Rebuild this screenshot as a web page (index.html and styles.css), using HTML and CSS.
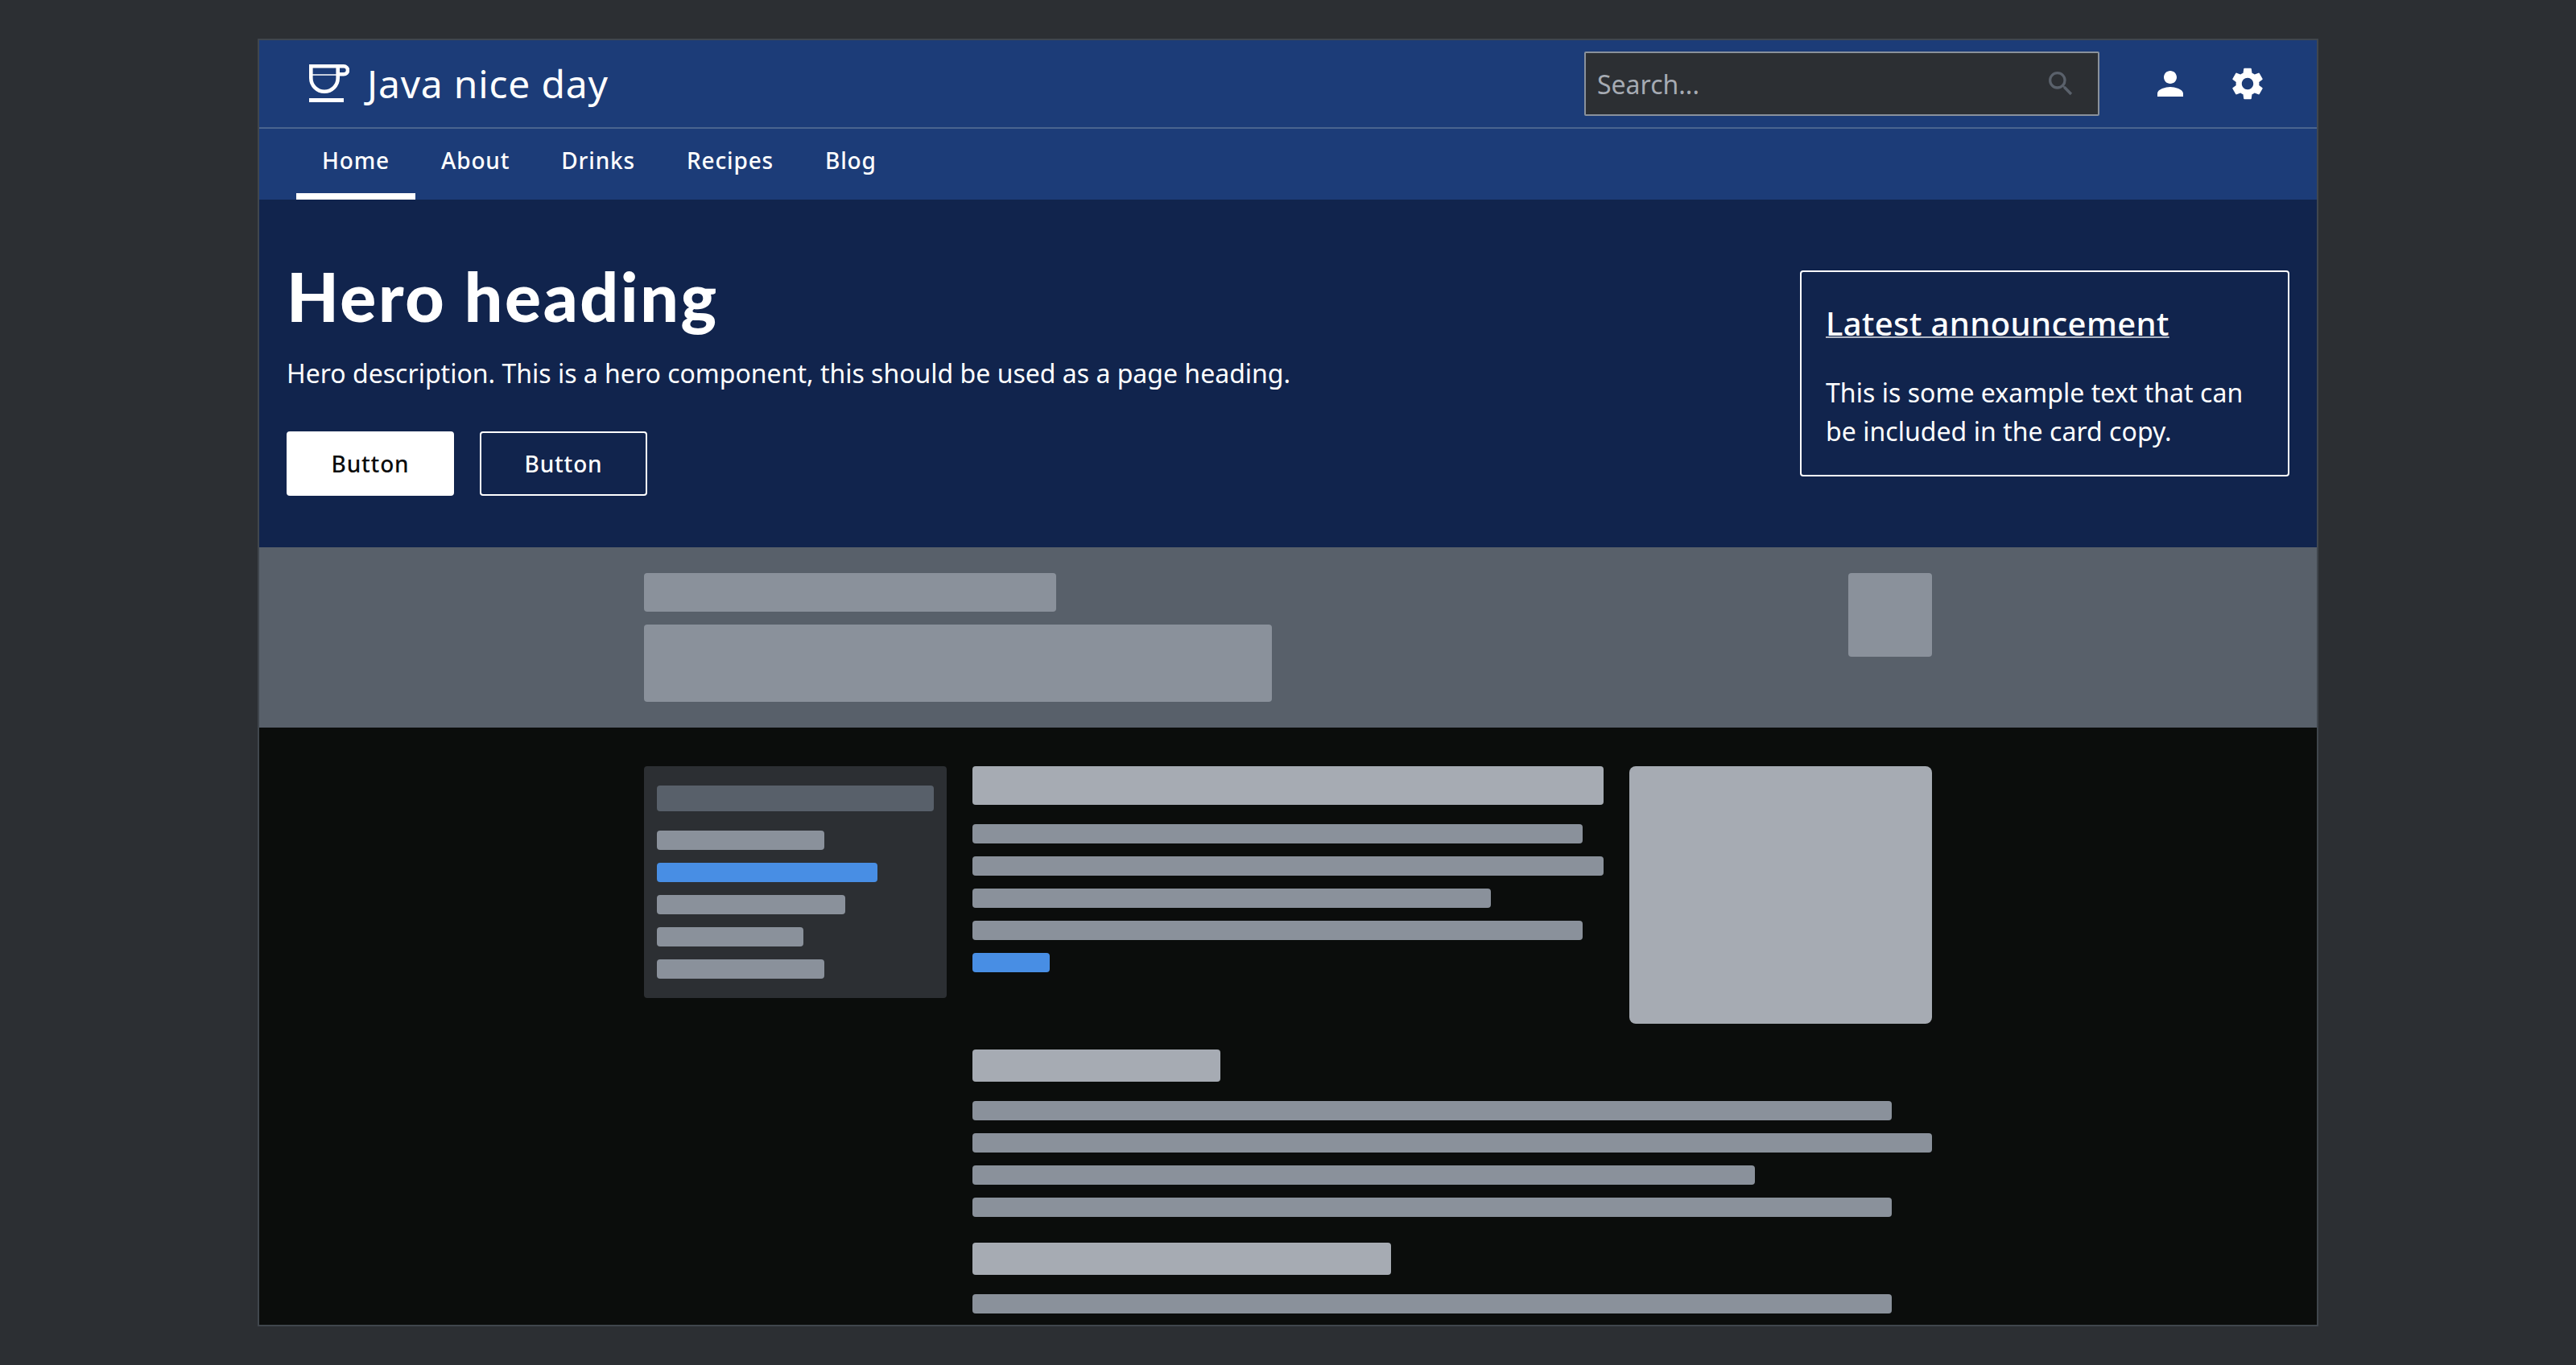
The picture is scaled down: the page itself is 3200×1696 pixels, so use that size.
FILE: index.html
```html
<!DOCTYPE html>
<html>
<head>
  <title>Java nice day</title>
  <link rel="stylesheet" href="styles.css">
</head>
<body>
  <div class="frame">
    <header class="topbar">
      <div class="brand">
        <svg class="brand-icon" viewBox="0 0 50 48" fill="none" stroke="#fff" stroke-width="4.6">
          <path d="M0 2.3H43A5 5 0 0 1 43 12.3H36"/>
          <path d="M2.3 2.3V17A16.7 16.7 0 0 0 35.7 17V2.3"/>
          <path d="M4 13H34" stroke-width="2" stroke-opacity=".75"/>
          <path d="M0 44.5H43" stroke-width="5"/>
        </svg>
        <span class="brand-name">Java nice day</span>
      </div>
      <div class="search">
        <span class="search-text">Search...</span>
        <svg class="search-icon" viewBox="0 0 24 24"><path d="M15.5 14h-.79l-.28-.27A6.47 6.47 0 0 0 16 9.5 6.5 6.5 0 1 0 9.5 16c1.61 0 3.09-.59 4.23-1.57l.27.28v.79l5 4.99L20.49 19l-4.99-5zm-6 0C7.01 14 5 11.99 5 9.5S7.01 5 9.5 5 14 7.01 14 9.5 11.99 14 9.5 14z"/></svg>
      </div>
      <div class="top-icons">
        <svg class="top-icon" viewBox="0 0 24 24"><path d="M12 12c2.21 0 4-1.79 4-4s-1.79-4-4-4-4 1.79-4 4 1.79 4 4 4zm0 2c-2.67 0-8 1.34-8 4v2h16v-2c0-2.66-5.33-4-8-4z"/></svg>
        <svg class="top-icon" viewBox="0 0 24 24"><path d="M19.14 12.94c.04-.3.06-.61.06-.94 0-.32-.02-.64-.07-.94l2.03-1.58a.49.49 0 0 0 .12-.61l-1.92-3.32a.488.488 0 0 0-.59-.22l-2.39.96c-.5-.38-1.03-.7-1.62-.94l-.36-2.54a.484.484 0 0 0-.48-.41h-3.84c-.24 0-.43.17-.47.41l-.36 2.54c-.59.24-1.13.57-1.62.94l-2.39-.96c-.22-.08-.47 0-.59.22L2.74 8.87c-.12.21-.08.47.12.61l2.03 1.58c-.05.3-.09.63-.09.94s.02.64.07.94l-2.03 1.58a.49.49 0 0 0-.12.61l1.92 3.32c.12.22.37.29.59.22l2.39-.96c.5.38 1.03.7 1.62.94l.36 2.54c.05.24.24.41.48.41h3.84c.24 0 .44-.17.47-.41l.36-2.54c.59-.24 1.13-.56 1.62-.94l2.39.96c.22.08.47 0 .59-.22l1.92-3.32c.12-.22.07-.47-.12-.61l-2.01-1.58zM12 15.6c-1.98 0-3.6-1.62-3.6-3.6s1.62-3.6 3.6-3.6 3.6 1.62 3.6 3.6-1.62 3.6-3.6 3.6z"/></svg>
      </div>
    </header>

    <nav class="nav">
      <a class="nav-item active">Home</a>
      <a class="nav-item">About</a>
      <a class="nav-item">Drinks</a>
      <a class="nav-item">Recipes</a>
      <a class="nav-item">Blog</a>
    </nav>

    <section class="hero">
      <div class="hero-copy">
        <h1>Hero heading</h1>
        <p>Hero description. This is a hero component, this should be used as a page heading.</p>
        <div class="hero-buttons">
          <a class="btn btn-solid">Button</a>
          <a class="btn btn-outline">Button</a>
        </div>
      </div>
      <div class="card">
        <h2>Latest announcement</h2>
        <p>This is some example text that can be included in the card copy.</p>
      </div>
    </section>

    <section class="band">
      <div class="band-inner">
        <div class="band-text">
          <div class="sk sk-mid w-512 h-48"></div>
          <div class="sk sk-mid w-780 h-96"></div>
        </div>
        <div class="sk sk-mid band-square"></div>
      </div>
    </section>

    <main class="content">
      <div class="content-inner">
        <aside class="sidebar">
          <div class="sk sk-dim side-title"></div>
          <div class="side-rows">
            <div class="sk sk-mid w-208 h-24"></div>
            <div class="sk sk-blue w-274 h-24"></div>
            <div class="sk sk-mid w-234 h-24"></div>
            <div class="sk sk-mid w-182 h-24"></div>
            <div class="sk sk-mid w-208 h-24"></div>
          </div>
        </aside>
        <div class="article">
          <div class="intro">
            <div class="intro-text">
              <div class="sk sk-light h-48 intro-head"></div>
              <div class="sk sk-mid w-758 h-24"></div>
              <div class="sk sk-mid w-784 h-24"></div>
              <div class="sk sk-mid w-644 h-24"></div>
              <div class="sk sk-mid w-758 h-24"></div>
              <div class="sk sk-blue w-96 h-24"></div>
            </div>
            <div class="sk sk-light intro-image"></div>
          </div>
          <div class="block">
            <div class="sk sk-light w-308 h-40 block-head"></div>
            <div class="sk sk-mid w-1142 h-24"></div>
            <div class="sk sk-mid w-1192 h-24"></div>
            <div class="sk sk-mid w-972 h-24"></div>
            <div class="sk sk-mid w-1142 h-24"></div>
          </div>
          <div class="block">
            <div class="sk sk-light w-520 h-40 block-head"></div>
            <div class="sk sk-mid w-1142 h-24"></div>
          </div>
        </div>
      </div>
    </main>
  </div>
</body>
</html>
```

FILE: styles.css
```css
* {
  box-sizing: border-box;
}
body {
  margin: 0;
  height: 1696px;
  overflow: hidden;
  padding-top: 48px;
  background-color: #2c2f33;
  font-family: "Noto Sans", sans-serif;
  color: #fff;
}
.frame {
  display: flex;
  flex-direction: column;
  width: 2560px;
  height: 1600px;
  margin: 0 auto;
  border: 2px solid #40464d;
  overflow: hidden;
}

/* top bar */
.topbar {
  display: flex;
  align-items: center;
  height: 110px;
  padding: 0 62px 0 62px;
  background-color: #1c3c78;
  border-bottom: 2px solid #49648f;
}
.brand {
  display: flex;
  align-items: center;
  gap: 22px;
  margin-right: auto;
}
.brand-icon {
  width: 50px;
  height: 48px;
}
.brand-name {
  font-size: 48px;
  line-height: 64px;
  letter-spacing: 0.8px;
}
.search {
  display: flex;
  align-items: center;
  justify-content: space-between;
  width: 640px;
  height: 80px;
  padding: 0 26px 0 14px;
  background-color: #2c2f33;
  border: 2px solid #8a919b;
  border-radius: 2px;
}
.search-text {
  font-size: 32px;
  color: #a6abb3;
}
.search-icon {
  width: 40px;
  height: 40px;
  fill: #5a616b;
}
.top-icons {
  display: flex;
  gap: 48px;
  margin-left: 64px;
}
.top-icon {
  display: block;
  width: 48px;
  height: 48px;
  fill: #fff;
}

/* nav */
.nav {
  display: flex;
  height: 88px;
  padding-left: 46px;
  background-color: #1c3c78;
}
.nav-item {
  padding: 0 32px;
  font-size: 28px;
  font-weight: 500;
  letter-spacing: 0.84px;
  line-height: 78px;
  border-bottom: 8px solid transparent;
}
.nav-item.active {
  border-bottom-color: #fff;
}

/* hero */
.hero {
  display: flex;
  justify-content: space-between;
  align-items: center;
  height: 432px;
  padding: 0 34px;
  background-color: #11244d;
}
.hero-copy h1 {
  margin: 0;
  font-family: Lato, "Noto Sans", sans-serif;
  font-size: 84px;
  font-weight: 900;
  letter-spacing: 2.6px;
  line-height: 112px;
}
.hero-copy p {
  margin: 16px 0 0;
  font-size: 32px;
  line-height: 48px;
}
.hero-buttons {
  display: flex;
  gap: 32px;
  margin-top: 48px;
}
.btn {
  width: 208px;
  height: 80px;
  font-size: 28px;
  font-weight: 500;
  letter-spacing: 0.84px;
  line-height: 76px;
  text-align: center;
  border: 2px solid #fff;
  border-radius: 4px;
}
.btn-solid {
  background-color: #fff;
  color: #0a0c0c;
}
.card {
  width: 608px;
  height: 256px;
  padding: 30px;
  padding-top: 32px;
  border: 2px solid #fff;
  border-radius: 4px;
}
.card h2 {
  margin: 0;
  font-size: 40px;
  font-weight: 500;
  letter-spacing: 0.4px;
  line-height: 64px;
  text-decoration: underline;
  text-decoration-thickness: 2px;
  text-decoration-color: #b0b6c2;
}
.card p {
  margin: 30px 0 0;
  font-size: 32px;
  line-height: 48px;
  letter-spacing: 0.04px;
}

/* skeleton blocks */
.sk {
  border-radius: 4px;
}
.sk-dim { background-color: #58606a; }
.sk-mid { background-color: #8a919b; }
.sk-light { background-color: #a6abb3; }
.sk-blue { background-color: #488ee4; }

.h-24 { height: 24px; }
.h-40 { height: 40px; }
.h-48 { height: 48px; }
.h-96 { height: 96px; }
.w-96 { width: 96px; }
.w-182 { width: 182px; }
.w-208 { width: 208px; }
.w-234 { width: 234px; }
.w-274 { width: 274px; }
.w-308 { width: 308px; }
.w-512 { width: 512px; }
.w-520 { width: 520px; }
.w-644 { width: 644px; }
.w-758 { width: 758px; }
.w-780 { width: 780px; }
.w-784 { width: 784px; }
.w-972 { width: 972px; }
.w-1142 { width: 1142px; }
.w-1192 { width: 1192px; }

/* grey band */
.band {
  height: 224px;
  padding-top: 32px;
  background-color: #58606a;
}
.band-inner {
  display: flex;
  justify-content: space-between;
  width: 1600px;
  margin: 0 auto;
}
.band-text {
  display: flex;
  flex-direction: column;
  gap: 16px;
}
.band-square {
  width: 104px;
  height: 104px;
}

/* page body */
.content {
  flex: 1;
  padding-top: 48px;
  background-color: #0b0d0c;
}
.content-inner {
  display: flex;
  align-items: flex-start;
  gap: 32px;
  width: 1600px;
  margin: 0 auto;
}
.sidebar {
  width: 376px;
  padding: 24px 16px;
  background-color: #2c2f33;
  border-radius: 4px;
}
.side-title {
  height: 32px;
}
.side-rows {
  display: flex;
  flex-direction: column;
  gap: 16px;
  margin-top: 24px;
}
.article {
  width: 1192px;
}
.intro {
  display: flex;
  justify-content: space-between;
}
.intro-text {
  display: flex;
  flex-direction: column;
  gap: 16px;
  width: 784px;
}
.intro-head {
  margin-bottom: 8px;
}
.intro-image {
  width: 376px;
  height: 320px;
  border-radius: 8px;
}
.block {
  display: flex;
  flex-direction: column;
  gap: 16px;
  margin-top: 32px;
}
.block-head {
  margin-bottom: 8px;
}
```
